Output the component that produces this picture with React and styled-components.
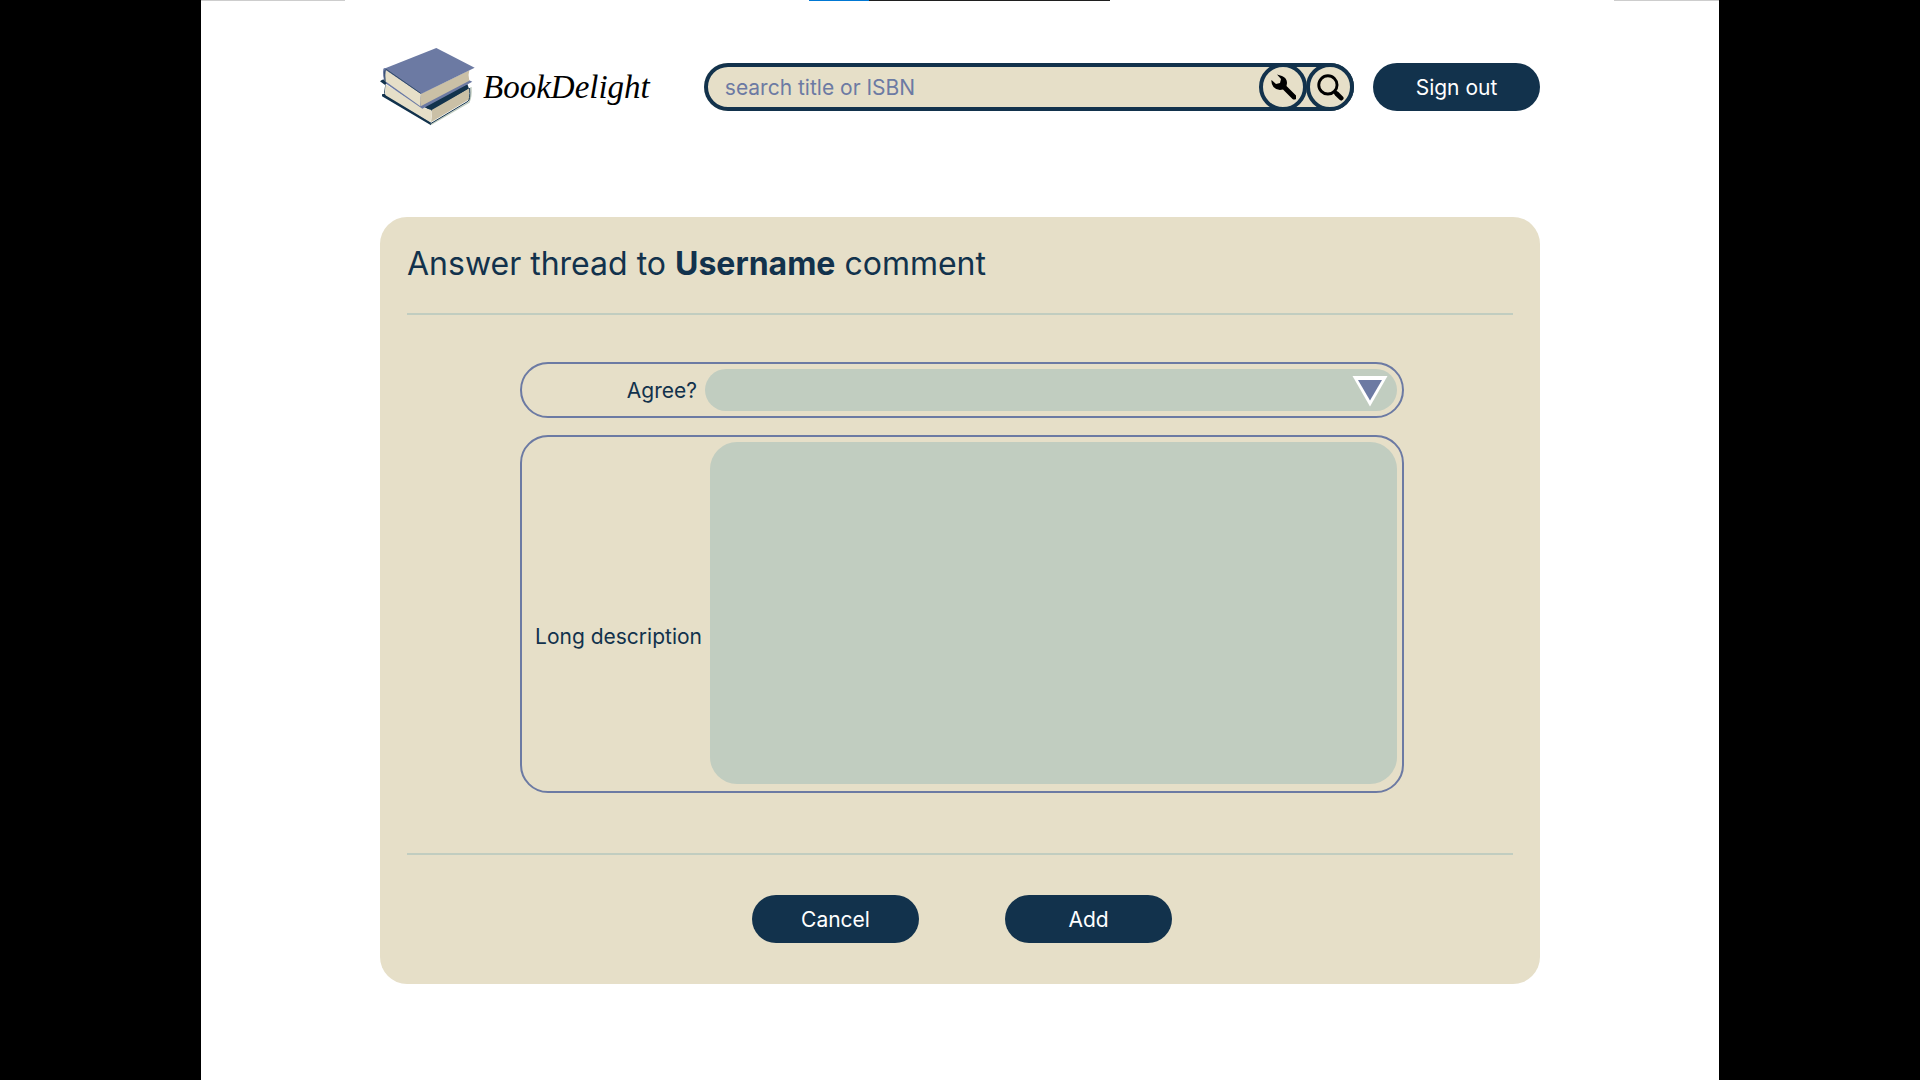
import React from "react";
import styled, { createGlobalStyle } from "styled-components";

const navy = "#12324c";
const cream = "#e6dfc8";
const sage = "#c1cdc0";
const violet = "#6c7aa3";

const GlobalStyle = createGlobalStyle`
  *, *::before, *::after { box-sizing: border-box; }
  body {
    margin: 0;
    background: #000;
    color: ${navy};
    font-family: Inter, "Liberation Sans", sans-serif;
  }
  button, input, select, textarea { font: inherit; color: inherit; }
`;

const Page = styled.div`
  min-height: 100vh;
  margin: 0 201px;
  background: #fff;
`;

const TopStrip = styled.div`
  display: flex;
  height: 1px;
`;

const Segment = styled.span`
  flex: ${(p) => p.$size} 1 0;
  background: ${(p) => p.$color};
`;

const Header = styled.header`
  display: flex;
  align-items: center;
  padding: 46px 179px 0;
`;

const Brand = styled.a`
  display: flex;
  align-items: center;
  gap: 7px;
  margin-right: 54px;
  color: #000;
  text-decoration: none;
  font: italic 33px/40px "Liberation Serif", serif;
`;

const SearchBar = styled.form`
  display: flex;
  flex: 1;
  height: 48px;
  margin-right: 19px;
  border-radius: 24px;
  background: ${cream};
  box-shadow: inset 0 0 0 4px ${navy};
`;

const SearchInput = styled.input`
  flex: 1;
  min-width: 0;
  padding: 0 21px;
  border: 0;
  background: transparent;
  outline: none;
  font-size: 21px;
  &::placeholder { color: ${violet}; opacity: 1; }
`;

const RoundButton = styled.button`
  display: grid;
  place-items: center;
  width: 48px;
  height: 48px;
  padding: 0;
  margin-left: -1px;
  border: 4px solid ${navy};
  border-radius: 50%;
  background: ${cream};
  color: #000;
`;

const PillButton = styled.button`
  width: 167px;
  height: 48px;
  border: 0;
  border-radius: 24px;
  background: ${navy};
  color: #fff;
  font-size: 21px;
`;

const Card = styled.main`
  margin: 90px 179px 0;
  padding: 27px 27px 41px;
  border-radius: 27px;
  background: ${cream};
`;

const Title = styled.h1`
  margin: 0;
  font-size: 32px;
  line-height: 40px;
  font-weight: 400;

  strong { font-weight: 700; }
`;

const Divider = styled.hr`
  height: 2px;
  margin: ${(p) => p.$top}px 0 0;
  border: 0;
  background: ${sage};
`;

const Form = styled.form`
  display: flex;
  flex-direction: column;
`;

const Fields = styled.div`
  display: grid;
  gap: 17px;
  margin: 47px 109px 0 113px;
`;

const Field = styled.div`
  display: flex;
  padding: 5px;
  border: 2px solid ${violet};
  border-radius: 28px;
`;

const Label = styled.label`
  display: flex;
  align-items: center;
  justify-content: flex-end;
  width: ${(p) => p.$width}px;
  padding: ${(p) => p.$drop || 0}px 8px 0 0;
  font-size: 21px;
  white-space: nowrap;
`;

const SelectBox = styled.div`
  position: relative;
  flex: 1;
`;

const Select = styled.select`
  display: block;
  width: 100%;
  height: 42px;
  padding: 0 60px 0 21px;
  border: 0;
  border-radius: 21px;
  background: ${sage};
  appearance: none;
`;

const Arrow = styled.svg`
  position: absolute;
  top: 7px;
  right: 9px;
  pointer-events: none;
`;

const TextArea = styled.textarea`
  display: block;
  flex: 1;
  height: 342px;
  margin-bottom: 2px;
  padding: 21px;
  border: 0;
  border-radius: 27px;
  background: ${sage};
  resize: none;
`;

const Actions = styled.div`
  display: flex;
  justify-content: center;
  gap: 86px;
  margin: 40px 109px 0 113px;
`;

function BooksLogo() {
  return (
    <svg width="96" height="80" viewBox="60 51 288 240" aria-hidden="true">
      <path fill={navy} d="M62 151 77 156 72 190 212 276 213 286 66 199 66 193 74 191 78 163Z" />
      <path fill={navy} d="M76 165 190 228 322 162 327 176 215 244Z" />
      <path fill={cream} d="M77 163 75 192Q76 197 84 200L211 277Q217 256 214 240L184 232Z" />
      <path fill="#cac0a6" d="M215 240 330 174Q325 192 328 208L213 277Q217 258 215 240Z" />
      <path fill="none" stroke={sage} strokeWidth="4" d="M213 283 327 217Q335 199 333 171" />
      <path fill="none" stroke={navy} strokeWidth="3" d="M212 281 324 214Q331 210 329 174" />
      <path fill={violet} d="M70 116Q73 113 78 114L182 188 183 224 326 150 337 155 187 236 76 160Q66 138 70 116Z" />
      <path fill={navy} d="M60 154 70 148 80 160 74 164Z" />
      <path fill={cream} d="M78 120Q74 139 76 154L181 229Q179 208 183 191Z" />
      <path fill="#cac0a6" d="M183 191 328 121Q323 136 328 152L182 229Q178 210 183 191Z" />
      <path fill={violet} d="M229 54 344 113 183 192 72 116Z" />
      <path fill="none" stroke={navy} strokeWidth="2" d="M182 190 80 119Q73 117 74 133L76 155" />
    </svg>
  );
}

function WrenchIcon() {
  return (
    <svg width="26" height="26" viewBox="-1 0 26 26" aria-hidden="true">
      <path
        fill="currentColor"
        d="M6 .5 11 2Q16 4 16 9L15.500 12 25 21.500Q26 23 25 25 23 26 21.500 25L12 15.500Q6 17 2.500 13 0 10 .5 6L5 10 9 9 10 5Z"
      />
    </svg>
  );
}

function SearchIcon() {
  return (
    <svg width="27" height="27" viewBox="0 0 26 26" fill="none" stroke="currentColor" aria-hidden="true">
      <circle cx="10.500" cy="10.500" r="8.800" strokeWidth="2.800" />
      <path strokeWidth="3.500" d="m16.500 16.500 3 3" />
      <path strokeWidth="4.500" strokeLinecap="round" d="m19 19 4.300 4.300" />
    </svg>
  );
}

export default function App() {
  return (
    <>
      <GlobalStyle />
      <Page>
        <TopStrip aria-hidden="true">
          <Segment $size={144} $color="#cdcdcd" />
          <Segment $size={464} $color="#fff" />
          <Segment $size={60} $color="#0078d4" />
          <Segment $size={241} $color="#1f1f1f" />
          <Segment $size={504} $color="#fff" />
          <Segment $size={105} $color="#cdcdcd" />
        </TopStrip>
        <Header>
          <Brand href="#">
            <BooksLogo />
            <span>BookDelight</span>
          </Brand>
          <SearchBar role="search" onSubmit={(e) => e.preventDefault()}>
            <SearchInput aria-label="search title or ISBN" placeholder="search title or ISBN" />
            <RoundButton type="button" aria-label="Search settings">
              <WrenchIcon />
            </RoundButton>
            <RoundButton type="submit" aria-label="Search">
              <SearchIcon />
            </RoundButton>
          </SearchBar>
          <PillButton type="button">Sign out</PillButton>
        </Header>
        <Card>
          <Title>
            Answer thread to <strong>Username</strong> comment
          </Title>
          <Divider $top={29} />
          <Form onSubmit={(e) => e.preventDefault()}>
            <Fields>
              <Field>
                <Label htmlFor="agree" $width={178}>Agree?</Label>
                <SelectBox>
                  <Select id="agree" defaultValue="">
                    <option value="" />
                    <option value="yes">Yes</option>
                    <option value="no">No</option>
                  </Select>
                  <Arrow width="36" height="31" viewBox="0 0 36 31" aria-hidden="true">
                    <path fill="#fff" d="M.5 0h35L18 30.500Z" />
                    <path fill={violet} d="M6 4h24L18 24.500Z" />
                  </Arrow>
                </SelectBox>
              </Field>
              <Field>
                <Label htmlFor="description" $width={183} $drop={44}>Long description</Label>
                <TextArea id="description" />
              </Field>
            </Fields>
            <Divider $top={60} />
            <Actions>
              <PillButton type="button">Cancel</PillButton>
              <PillButton type="submit">Add</PillButton>
            </Actions>
          </Form>
        </Card>
      </Page>
    </>
  );
}
